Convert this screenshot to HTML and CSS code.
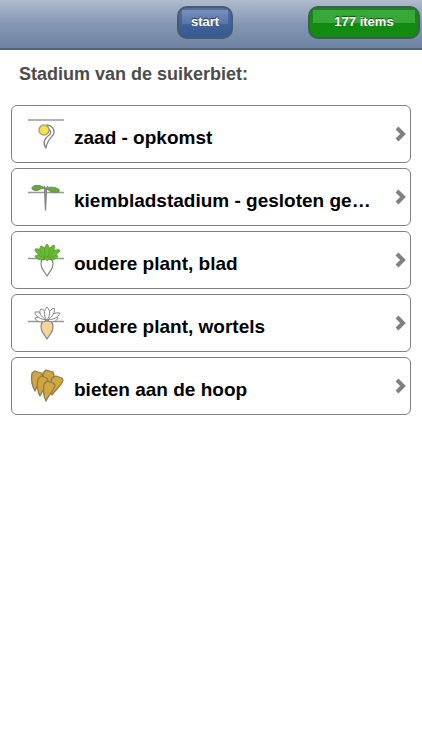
FILE: index.html
```html
<!DOCTYPE html>
<html lang="nl">
<head>
<meta charset="utf-8">
<meta name="viewport" content="width=device-width, initial-scale=1">
<title>Stadium van de suikerbiet</title>
<link rel="stylesheet" href="styles.css">
</head>
<body>
<header class="bar">
  <button class="btn btn-start" type="button">start</button>
  <button class="btn btn-items" type="button">177 items</button>
</header>
<main class="page">
  <h1 class="title">Stadium van de suikerbiet:</h1>
  <ul class="list">
    <li><a class="card" href="#zaad">
      <svg class="icon" viewBox="0 0 36 38" aria-hidden="true">
        <path class="soil" d="M0 7H36"/>
        <path class="outline white" d="M19 12C23 12 27 16 26 20C25 24 19 26 18 35C14 30 17 25 20 23C23 21 24 18 20 16Z"/>
        <circle class="seed" cx="16" cy="17" r="5"/>
      </svg>
      <span class="label">zaad - opkomst</span>
      <svg class="arrow" viewBox="0 0 11 16" aria-hidden="true"><path d="M2 2L8 8L2 14"/></svg>
    </a></li>
    <li><a class="card" href="#kiemblad">
      <svg class="icon" viewBox="0 0 36 38" aria-hidden="true">
        <path class="soil" d="M0 16.500H36"/>
        <path class="outline stem" d="M16.500 13L17.500 34L18.500 13Z"/>
        <path class="leaf" d="M17.500 13C14 9 8 8.500 5 10.500C2 13 6 15 9 14.500C12 14 14 11 17.500 13Z"/>
        <path class="leaf" d="M17.500 13C21 10 28 11 31 13.500C33 16 28 17.500 24 16C21 15 20 13 17.500 13Z"/>
        <path class="outline" d="M16 10L18 13L20 10"/>
      </svg>
      <span class="label">kiembladstadium - gesloten ge…</span>
      <svg class="arrow" viewBox="0 0 11 16" aria-hidden="true"><path d="M2 2L8 8L2 14"/></svg>
    </a></li>
    <li><a class="card" href="#blad">
      <svg class="icon" viewBox="0 0 36 38" aria-hidden="true">
        <path class="soil" d="M0 19.500H36"/>
        <path class="outline white" d="M15 19C12 23 13 28 15 31L19 37L23 31C25 28 26 23 23 19Z"/>
        <g class="foliage green">
          <path d="M18 20C12 22 8 20 7 17C12 15 16 16 18 20Z"/>
          <path d="M20 20C24 22 29 20 30 17C26 15 21 16 20 20Z"/>
          <path d="M18 19C12 18 7 14 7 10C13 9 17 13 18 19Z"/>
          <path d="M20 19C20 14 25 10 32 11C30 16 26 18 20 19Z"/>
          <path d="M18.500 19C13 16 10 10 13 7C18 8 19 13 18.500 19Z"/>
          <path d="M19.500 19C18 14 21 8 26 6C28 10 24 16 19.500 19Z"/>
          <path d="M19 19C15 14 16 8 19 5C23 9 22 14 19 19Z"/>
          <path d="M19 17L15 21L18 20L19 22L21 20L24 21Z"/>
        </g>
      </svg>
      <span class="label">oudere plant, blad</span>
      <svg class="arrow" viewBox="0 0 11 16" aria-hidden="true"><path d="M2 2L8 8L2 14"/></svg>
    </a></li>
    <li><a class="card" href="#wortels">
      <svg class="icon" viewBox="0 0 36 38" aria-hidden="true">
        <path class="soil" d="M0 19.500H36"/>
        <path class="outline tan" d="M15 19C12 23 13 28 15 31L19 37L23 31C25 28 26 23 23 19Z"/>
        <g class="foliage">
          <path d="M18 19C12 21 8 19 7 16C12 14 16 15 18 19Z"/>
          <path d="M20 19C24 21 29 19 30 16C26 14 21 15 20 19Z"/>
          <path d="M18 18C12 17 7 14 7 10C13 9 17 13 18 18Z"/>
          <path d="M20 18C20 14 25 10 32 11C30 16 26 17 20 18Z"/>
          <path d="M18.500 18C13 15 10 10 13 7C18 8 19 13 18.500 18Z"/>
          <path d="M19.500 18C18 14 21 8 26 6C28 10 24 15 19.500 18Z"/>
          <path d="M19 18C15 14 16 8 19 5C23 9 22 14 19 18Z"/>
        </g>
      </svg>
      <span class="label">oudere plant, wortels</span>
      <svg class="arrow" viewBox="0 0 11 16" aria-hidden="true"><path d="M2 2L8 8L2 14"/></svg>
    </a></li>
    <li><a class="card" href="#hoop">
      <svg class="icon" viewBox="0 0 36 38" aria-hidden="true">
        <g class="heap">
          <path d="M15 8L18 5L25 7L26 10C26 14 23 17 22 22L16 17Z"/>
          <path d="M4 8L7 6L13 8L15 10C14 15 9 19 7 26C4 21 3 14 4 8Z"/>
          <path d="M24 13L28 11L34 13L35 15C34 21 28 24 24 30C22 24 22 18 24 13Z"/>
          <path d="M10 14L13 11L19 13L20 15C20 20 15 24 12 31C9 26 9 19 10 14Z"/>
          <path d="M16 19L19 16L25 18L27 20C26 26 21 29 18 36C15 30 15 24 16 19Z"/>
        </g>
      </svg>
      <span class="label">bieten aan de hoop</span>
      <svg class="arrow" viewBox="0 0 11 16" aria-hidden="true"><path d="M2 2L8 8L2 14"/></svg>
    </a></li>
  </ul>
</main>
</body>
</html>
```
FILE: styles.css
```css
* { box-sizing: border-box; }
body {
  margin: 0;
  background: #fff;
  font-family: "Liberation Sans", Arial, sans-serif;
}
.bar {
  display: grid;
  grid-template-columns: 1fr auto 1fr;
  align-items: start;
  height: 50px;
  padding: 6px 2px 0 0;
  border-bottom: 2px solid #56647a;
  background: linear-gradient(#b0bccd, #8497b3 50%, #6d84a2);
}
.btn {
  height: 33px;
  padding: 0 10px 1px;
  border: 2px solid #4a5a73;
  border-radius: 10px;
  color: #fff;
  font: bold 13px/20px "Liberation Sans", Arial, sans-serif;
  text-shadow: 0 -1px 1px rgba(0, 0, 0, 0.6);
}
.btn-start {
  grid-column: 2;
  width: 56px;
  margin-right: 10px;
  background:
    linear-gradient(#7890bc, #5774a8) 50% 2px / calc(100% - 6px) 14px no-repeat,
    linear-gradient(#506fa6, #355991);
}
.btn-items {
  grid-column: 3;
  justify-self: end;
  width: 112px;
  border-color: #405d50;
  background:
    linear-gradient(#3aa83c, #38a638) 50% 2px / calc(100% - 6px) 13px no-repeat,
    #118c11;
}
.page { padding: 13px 11px; }
.title {
  margin: 0 8px 20px;
  color: #4c4c4c;
  font-size: 18px;
  line-height: 22px;
}
.list {
  display: grid;
  gap: 5px;
  margin: 0;
  padding: 0;
  list-style: none;
}
.list li { min-width: 0; }
.card {
  display: flex;
  align-items: center;
  height: 58px;
  padding: 0 4px 0 16px;
  border: 1px solid #808080;
  border-radius: 6px;
  color: #000;
  text-decoration: none;
}
.icon {
  flex: none;
  width: 36px;
  height: 38px;
  margin: 0 10px 4px 0;
  fill: none;
  stroke: #858585;
  stroke-linejoin: round;
}
.soil { stroke: #999; stroke-width: 1.5; }
.outline { stroke-width: 1.3; }
.white { fill: #fff; }
.stem { fill: #aaa; }
.tan { fill: #f0d596; }
.seed { fill: #f5e34c; stroke: #aaa17a; stroke-width: 1.5; }
.leaf { fill: #65aa35; stroke: #6d8a5d; }
.foliage { fill: #fff; }
.green { fill: #67bd2f; stroke: #5d9440; stroke-width: 0.8; }
.heap { fill: #d2a63c; stroke: #8b7d58; stroke-width: 1.3; }
.label {
  flex: 1;
  min-width: 0;
  margin-right: 18px;
  padding-top: 8px;
  overflow: hidden;
  font-size: 19px;
  font-weight: bold;
  line-height: 24px;
  text-overflow: ellipsis;
  white-space: nowrap;
}
.arrow {
  flex: none;
  width: 11px;
  height: 16px;
  fill: none;
  stroke: #808080;
  stroke-width: 4;
}
```
